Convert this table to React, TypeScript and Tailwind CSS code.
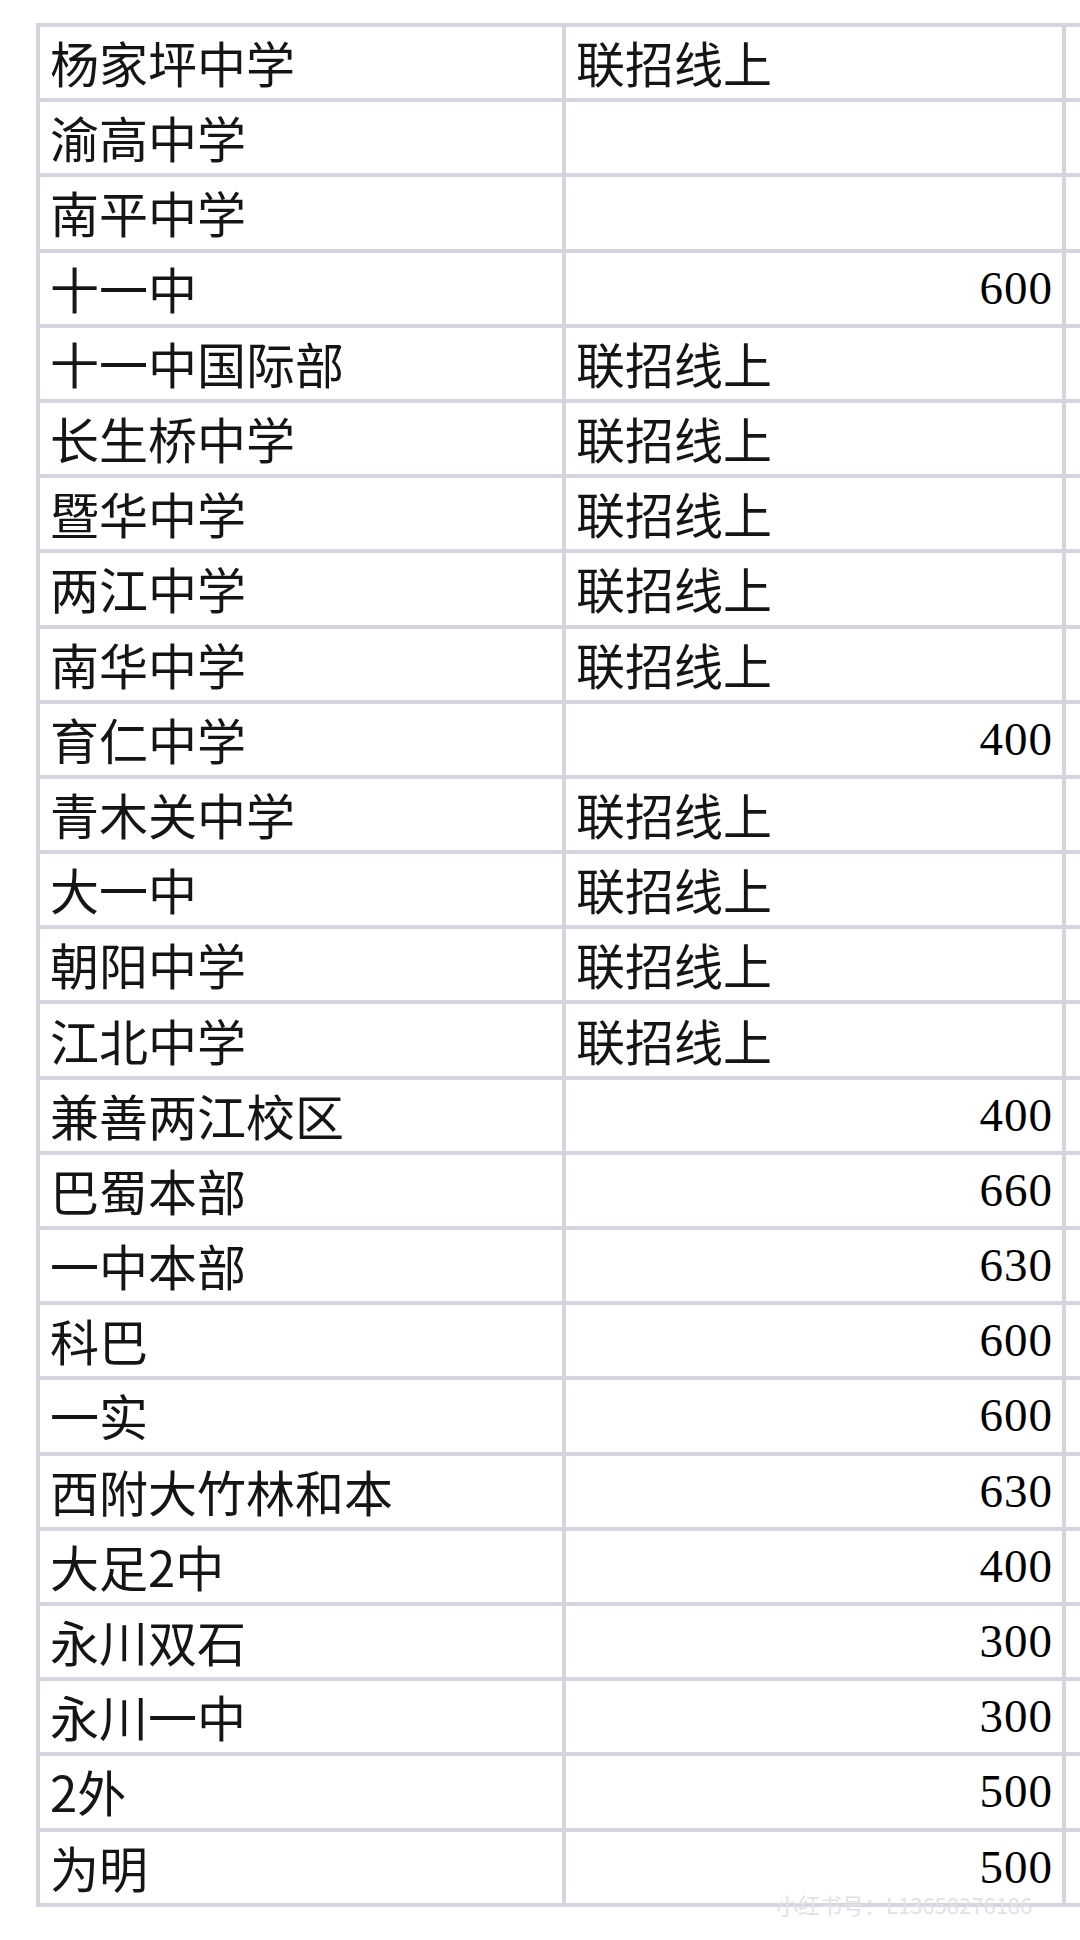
import React from 'react';

type Row = { name: string; score?: string; note?: string };

const rows: Row[] = [
  { name: '杨家坪中学', note: '联招线上' },
  { name: '渝高中学' },
  { name: '南平中学' },
  { name: '十一中', score: '600' },
  { name: '十一中国际部', note: '联招线上' },
  { name: '长生桥中学', note: '联招线上' },
  { name: '暨华中学', note: '联招线上' },
  { name: '两江中学', note: '联招线上' },
  { name: '南华中学', note: '联招线上' },
  { name: '育仁中学', score: '400' },
  { name: '青木关中学', note: '联招线上' },
  { name: '大一中', note: '联招线上' },
  { name: '朝阳中学', note: '联招线上' },
  { name: '江北中学', note: '联招线上' },
  { name: '兼善两江校区', score: '400' },
  { name: '巴蜀本部', score: '660' },
  { name: '一中本部', score: '630' },
  { name: '科巴', score: '600' },
  { name: '一实', score: '600' },
  { name: '西附大竹林和本', score: '630' },
  { name: '大足2中', score: '400' },
  { name: '永川双石', score: '300' },
  { name: '永川一中', score: '300' },
  { name: '2外', score: '500' },
  { name: '为明', score: '500' },
];

const cjk = "font-['Noto_Sans_CJK_SC','Noto_Sans',sans-serif]";

const App: React.FC = () => {
  return (
    <div className="w-[1080px] h-[1940px] bg-white overflow-hidden relative">
      <div className="pt-[23px] pl-[36px]">
        <div className="grid grid-cols-[522px_496px_40px] auto-rows-[71.2px] gap-[4px] p-[4px] bg-[#d5d5df] w-[1074px]">
          {rows.map((r, i) => (
            <React.Fragment key={i}>
              <div className={`bg-white flex items-center pl-[10px] pb-[2px] text-[49px] font-normal leading-none text-[#151515] ${cjk}`}>
                {r.name}
              </div>
              <div className="bg-white flex items-center">
                {r.note && (
                  <span className={`pl-[10px] pb-[2px] text-[49px] font-normal leading-none text-[#151515] ${cjk}`}>{r.note}</span>
                )}
                {r.score && (
                  <span className="ml-auto pr-[9px] text-[47px] leading-none tracking-[1px] text-black font-['Liberation_Serif',serif]">
                    {r.score}
                  </span>
                )}
              </div>
              <div className="bg-white" />
            </React.Fragment>
          ))}
        </div>
      </div>
      {/* faint watermark over the bottom-right corner */}
      <div className={`absolute left-[776px] top-[1893px] whitespace-nowrap text-[22px] leading-none text-[#e2e2e6] ${cjk}`}>
        小红书号：L13658276186
      </div>
    </div>
  );
};

export default App;
